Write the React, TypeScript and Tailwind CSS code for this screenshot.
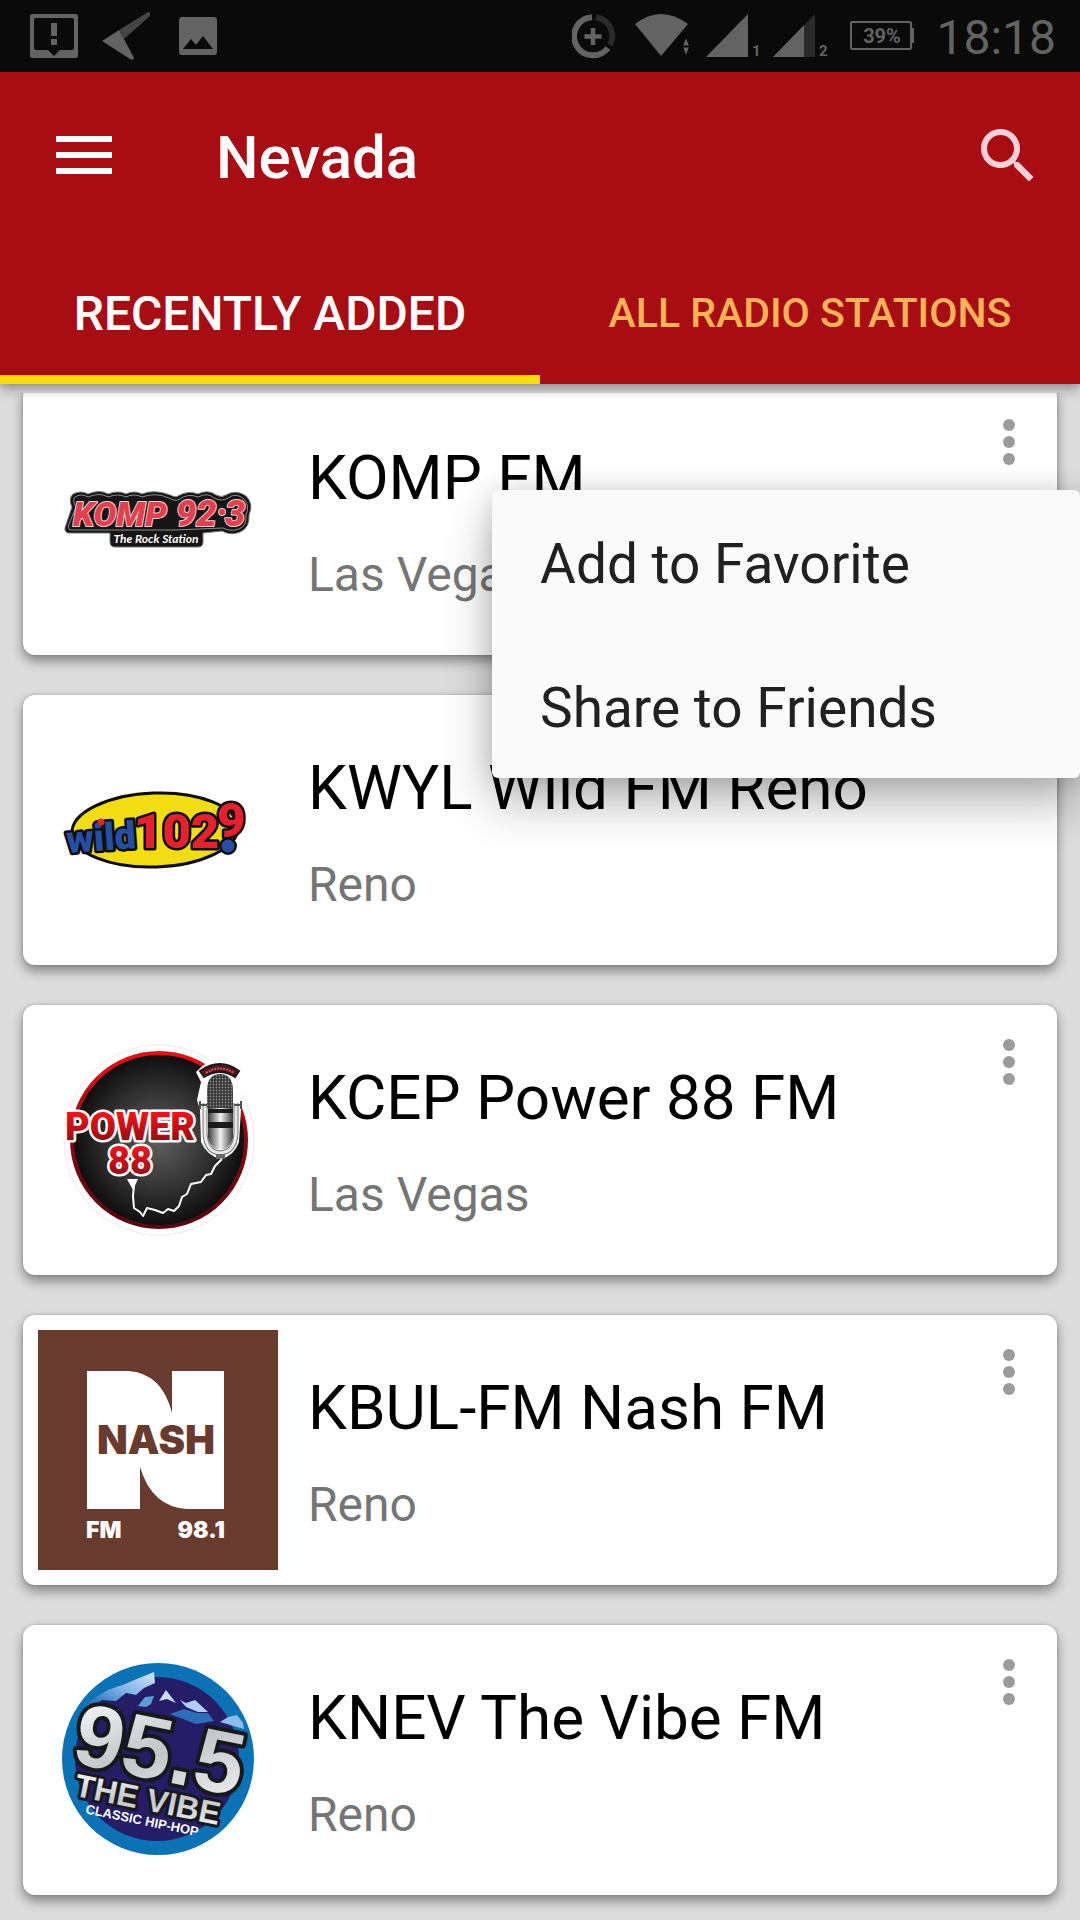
import { useState } from "react";

interface IStation {
  id: number;
  name: string;
  city: string;
  Logo: () => React.ReactElement;
}

const SANS = "'Liberation Sans', Arial, sans-serif";
const ROBOTO = "Roboto, sans-serif";

const tabs = ["Recently Added", "All Radio Stations"];
const menuItems = ["Add to Favorite", "Share to Friends"];

function KompLogo() {
  return (
    <svg viewBox="0 0 240 240" className="h-full w-full" aria-hidden="true">
      <path
        d="M35 94 Q43 90 50 94 Q62 89 70 94 Q80 90 88 94 Q96 90 104 94 Q116 89 132 95 Q138 98 140 96 Q150 90 160 94 Q170 89 178 95 Q184 98 188 95 Q198 89 208 96 Q216 104 211 115 Q212 128 202 132 Q193 136 184 131 L165 133 V142 Q165 147 160 147 H77 Q72 147 72 142 V133 H30 Q25 131 28 125 L34 107 Q30 99 35 94 Z"
        fill="#161515"
        stroke="#777"
        strokeWidth="1"
      />
      <path
        d="M37 97 Q43 93 50 97 Q62 92 70 97 Q80 93 88 97 Q96 93 104 97 Q118 92 131 98 Q138 102 142 99 Q150 93 160 97 Q170 92 176 98 Q184 102 190 98 Q198 92 206 99 Q212 106 208 115 Q209 126 201 129 Q193 132 185 128 L137 130 H32 Q29 128 31 124 L38 107 Q34 101 37 97 Z"
        fill="none"
        stroke="#83918f"
        strokeWidth="1"
      />
      <g
        fontFamily={ROBOTO}
        fontWeight="900"
        fontStyle="italic"
        fill="#e2404f"
        stroke="#f9cfd1"
        strokeWidth="2"
        strokeLinejoin="round"
        paintOrder="stroke"
      >
        <text x="35" y="126" fontSize="34">KOMP</text>
        <text x="138" y="126" fontSize="36">92</text>
        <circle cx="184" cy="112" r="3" />
        <text x="187" y="126" fontSize="36">3</text>
      </g>
      <text x="118" y="143" textAnchor="middle" fontFamily="Lato, sans-serif" fontSize="12" fontWeight="700" fontStyle="italic" fill="#fff">
        The Rock Station
      </text>
    </svg>
  );
}

function WildLogo() {
  return (
    <svg viewBox="0 0 240 240" className="h-full w-full" aria-hidden="true">
      <ellipse cx="117" cy="120" rx="83" ry="37" fill="#f2dd12" stroke="#0d0d0d" strokeWidth="3" transform="rotate(-2 117 120)" />
      <g fontFamily={ROBOTO} fontWeight="900" stroke="#0d0d0d" strokeWidth="5" strokeLinejoin="round" paintOrder="stroke">
        <text x="29" y="143" fontSize="38" fill="#264fa3" transform="rotate(-4 29 143)">wild</text>
        <circle cx="190" cy="136" r="6.500" fill="#264fa3" />
        <text x="96" y="138" fontSize="49" fill="#e8202d">102</text>
        <text x="179" y="127" fontSize="49" fill="#e8202d">9</text>
      </g>
      <circle cx="63" cy="112" r="3.500" fill="#e51f2b" />
    </svg>
  );
}

function PowerLogo() {
  return (
    <svg viewBox="0 0 240 240" className="h-full w-full" aria-hidden="true">
      <defs>
        <radialGradient id="power-disc">
          <stop offset="0" stopColor="#606060" />
          <stop offset="0.6" stopColor="#303030" />
          <stop offset="1" stopColor="#0c0c0c" />
        </radialGradient>
        <linearGradient id="power-ring" x1="0" y1="0" x2="0" y2="1">
          <stop offset="0" stopColor="#e80f12" />
          <stop offset="0.5" stopColor="#8d0710" />
          <stop offset="1" stopColor="#560513" />
        </linearGradient>
        <linearGradient id="power-text" x1="0" y1="0" x2="0" y2="1">
          <stop offset="0.2" stopColor="#ee1419" />
          <stop offset="0.9" stopColor="#8e0a10" />
        </linearGradient>
        <linearGradient id="power-mic" x1="0" y1="0" x2="1" y2="0">
          <stop offset="0" stopColor="#3a3a3a" />
          <stop offset="0.5" stopColor="#f2f2f2" />
          <stop offset="1" stopColor="#3d3d3d" />
        </linearGradient>
        <pattern id="power-mesh" width="3" height="3" patternUnits="userSpaceOnUse">
          <rect width="3" height="3" fill="#333" />
          <circle cx="1.500" cy="1.500" r="0.900" fill="#8b8b8b" />
        </pattern>
      </defs>
      <circle cx="121" cy="120" r="95" fill="#fff" stroke="#ececec" />
      <circle cx="121" cy="120" r="87" fill="url(#power-disc)" stroke="url(#power-ring)" strokeWidth="4" />
      <path d="M158 52 Q182 26 208 49 L205 60 L204 80 L203 90 L201 122 Q196 136 183 139 Q169 136 163 122 L162 90 L159 80 L163 62 Z" fill="#fff" />
      <path d="M162 51 Q182 37 201 51 L197 57 Q182 47 166 57 Z" fill="#5a141b" stroke="#181818" strokeWidth="2" />
      <path d="M168 53 Q182 44 196 53" fill="none" stroke="#c9565c" strokeWidth="2" strokeDasharray="2 1" />
      <path d="M167 83 V113 Q168 132 182 133 Q197 132 198 113 V83" fill="none" stroke="#777" strokeWidth="5" />
      <path d="M167 83 V113 Q168 132 182 133 Q197 132 198 113 V83" fill="none" stroke="#e9e9e9" strokeWidth="3" />
      <path d="M169 88 V71 Q169 54 182 54 Q195 54 195 71 V88 Z" fill="url(#power-mesh)" />
      <rect x="170" y="88" width="25" height="22" fill="url(#power-mic)" />
      <path d="M170 89h25v4h-25zM170 102h25v6h-25z" fill="#1b1b1b" />
      <path d="M170 108 H195 V118 Q192 129 182 130 Q173 129 170 118 Z" fill="url(#power-mic)" />
      <path d="M162 81v8M162 85h7M203 81v8M196 85h7" stroke="#505050" strokeWidth="2" />
      <path d="M178 134h9v5h-9z" fill="#666" />
      <path d="M94 160 L96 166 L95 176 L96 188 L102 192 L105 196 L109 188 L117 190 L125 193 L130 189 L136 191 L141 186 L144 177 L149 174 L153 164 L163 162 L168 155 L173 154 L177 146 L184 139" fill="none" stroke="#fff" strokeWidth="2" strokeLinejoin="round" />
      <path d="M89 159h11l-5 11z" fill="#fff" />
      <g fontFamily={ROBOTO} fontWeight="900" stroke="#fff" strokeWidth="5" strokeLinejoin="round" paintOrder="stroke" textAnchor="middle" fill="url(#power-text)">
        <text x="92" y="120" fontSize="38">POWER</text>
        <text x="92" y="154" fontSize="38">88</text>
      </g>
    </svg>
  );
}

function NashLogo() {
  return (
    <svg viewBox="0 0 240 240" className="h-full w-full" aria-hidden="true">
      <rect width="240" height="240" fill="#683b2e" />
      <path d="M49 41 H90 Q124 43 134 83 V41 H186 V179 H149 Q114 177 102 137 V179 H49 Z" fill="#fff" />
      <g fontFamily="Inter, sans-serif" fontWeight="900">
        <text x="118" y="124" fontSize="40" textAnchor="middle" fill="#683b2e">NASH</text>
        <text x="48" y="208" fontSize="23" fill="#fff">FM</text>
        <text x="187" y="208" fontSize="23" textAnchor="end" fill="#fff">98.1</text>
      </g>
    </svg>
  );
}

function VibeLogo() {
  return (
    <svg viewBox="0 0 240 240" className="h-full w-full" aria-hidden="true">
      <defs>
        <linearGradient id="vibe-text" x1="0" y1="0" x2="1" y2="1">
          <stop offset="0" stopColor="#fff" />
          <stop offset="0.5" stopColor="#c4c5c7" />
          <stop offset="1" stopColor="#f5f5f5" />
        </linearGradient>
        <linearGradient id="vibe-snow" x1="1" y1="0" x2="0" y2="1">
          <stop offset="0" stopColor="#d4e4fb" />
          <stop offset="0.5" stopColor="#7fb2e6" />
          <stop offset="1" stopColor="#0f62a8" />
        </linearGradient>
      </defs>
      <circle cx="120" cy="119" r="96" fill="#0b72b5" />
      <circle cx="119" cy="119" r="82" fill="#251d66" />
      <path d="M50 62 L70 50 L84 45 L116 32 L117 43 L106 48 L98 55 L88 53 L78 61 L64 60 L52 68 Z" fill="url(#vibe-snow)" />
      <path d="M100 66 L107 57 L116 56 L113 64 L108 67 Z" fill="#5f9bd8" />
      <path d="M121 61 L128 50 L138 63 L129 59 Z" fill="#c9dcf9" />
      <path d="M142 60 L148 63 L157 60 L170 72 L160 72 L148 67 Z" fill="#b3cdf4" />
      <path d="M132 74 L146 69 L159 73 L170 73 L176 81 L158 84 Z" fill="#2a6fb8" />
      <path d="M182 82 L190 77 L199 75 L205 83 L206 89 Z" fill="#8bbcec" />
      <g fontFamily={SANS} fontWeight="700" transform="rotate(11.500 36 122)">
        <g stroke="#17181c" strokeLinejoin="round" paintOrder="stroke" fill="url(#vibe-text)">
          <text x="32" y="123" fontSize="88" strokeWidth="8">95.5</text>
          <text x="42" y="155" fontSize="32" strokeWidth="6">THE VIBE</text>
        </g>
        <text x="57" y="170" fontSize="13" fill="#fff">CLASSIC HIP-HOP</text>
      </g>
    </svg>
  );
}

const stations: IStation[] = [
  { id: 0, name: "KOMP FM", city: "Las Vegas", Logo: KompLogo },
  { id: 1, name: "KWYL Wild FM Reno", city: "Reno", Logo: WildLogo },
  { id: 2, name: "KCEP Power 88 FM", city: "Las Vegas", Logo: PowerLogo },
  { id: 3, name: "KBUL-FM Nash FM", city: "Reno", Logo: NashLogo },
  { id: 4, name: "KNEV The Vibe FM", city: "Reno", Logo: VibeLogo },
];

function StatusBar() {
  return (
    <div className="flex h-18 items-center justify-between bg-[#0a0a0a] pr-6 pl-[30px] text-[#636363]">
      <div className="flex items-center gap-6">
        <svg viewBox="0 0 48 48" className="size-12" fill="currentColor">
          <path fillRule="evenodd" d="M2 2h44q2 0 2 2v40q0 2-2 2H2q-2 0-2-2V4q0-2 2-2zM6 6q-2 0-2 2v28q0 2 2 2h12l6 6 6-6h12q2 0 2-2V8q0-2-2-2z" />
          <path d="M21 11h6v13h-6zM21 27h6v6h-6z" />
        </svg>
        <svg viewBox="0 0 48 48" className="size-12">
          <path d="M0 29 L17 18 L22 27 L32 46 Q31 49 28 47 Z" fill="#636363" />
          <path d="M17 18 L46 0 Q50 1 47 5 L22 27 Z" fill="#444" />
        </svg>
        <svg viewBox="0 0 48 48" className="size-12" fill="currentColor">
          <path fillRule="evenodd" d="M8 5h32q3 0 3 3v32q0 3-3 3H8q-3 0-3-3V8q0-3 3-3zM9 37h30L29 24l-7 9-5-6z" />
        </svg>
      </div>
      <div className="flex items-center gap-[22px]">
        <div className="flex items-center gap-3">
          <svg viewBox="0 0 50 48" className="h-12 w-[50px]" fill="none">
            <path d="M20 5.300 A19 19 0 1 0 36 36" stroke="#636363" strokeWidth="6" />
            <path d="M24 5.300 A19 19 0 0 1 38 33" stroke="#2a2a2a" strokeWidth="6" />
            <path d="M21 16v17M12.500 24.500h17" stroke="#636363" strokeWidth="4.500" />
          </svg>
          <svg viewBox="0 0 60 48" className="h-12 w-[60px]" fill="currentColor">
            <path d="M1 12 Q27 -8 54 12 L27 44 Z" />
            <path d="M52 25l3.500 9h-7zM52 44l3.500-9h-7z" stroke="#0a0a0a" strokeWidth="1" />
          </svg>
          <svg viewBox="0 0 55 48" className="h-12 w-[55px]" fill="currentColor">
            <path d="M0 45H42V2z" />
            <text x="46" y="44" fontSize="15" fontWeight="700">1</text>
          </svg>
          <svg viewBox="0 0 55 48" className="h-12 w-[55px]" fill="currentColor">
            <path d="M0 45H42V2z" fill="#2a2a2a" />
            <path d="M0 45H31V13z" />
            <text x="46" y="44" fontSize="15" fontWeight="700">2</text>
          </svg>
        </div>
        <svg viewBox="0 0 64 48" className="h-12 w-16" fill="none">
          <rect x="1" y="10" width="60" height="27" rx="1" stroke="currentColor" strokeWidth="2" />
          <path d="M62.500 16v15" stroke="currentColor" strokeWidth="3" />
          <text x="32" y="31" textAnchor="middle" fontSize="20" fontWeight="700" fill="currentColor">39%</text>
        </svg>
        <span className="pt-1 text-5xl">18:18</span>
      </div>
    </div>
  );
}

function Popup({ onSelect }: { onSelect: () => void }) {
  return (
    <div
      role="menu"
      className="absolute top-[105px] -right-[23px] z-10 flex w-[588px] flex-col rounded-md bg-[#fafafa] shadow-[0_24px_48px_rgba(0,0,0,0.3),0_0_24px_rgba(0,0,0,0.12)]"
    >
      {menuItems.map((item) => (
        <button
          key={item}
          type="button"
          role="menuitem"
          onClick={onSelect}
          className="h-36 px-12 pt-1 text-left text-[55px] text-[#212121]"
        >
          {item}
        </button>
      ))}
    </div>
  );
}

function App() {
  const [activeTab, setActiveTab] = useState(0);
  const [openMenu, setOpenMenu] = useState<null | number>(0);

  return (
    <div className="flex min-h-screen w-full flex-col bg-[#dcdcdc] font-['Roboto',sans-serif]">
      <header className="relative z-20 bg-[#a80d14] text-white shadow-[0_4px_12px_rgba(0,0,0,0.4)]">
        <StatusBar />
        <div className="flex h-42 items-center pr-9 pl-12">
          <button type="button" aria-label="Open navigation">
            <svg viewBox="0 0 72 72" className="size-18" fill="currentColor">
              <path d="M8 16h56v6H8zM8 32h56v6H8zM8 48h56v6H8z" />
            </svg>
          </button>
          <h1 className="ml-24 flex-1 pt-1 text-6xl font-medium">Nevada</h1>
          <button type="button" aria-label="Search" className="text-[#fbd0d6]">
            <svg viewBox="0 0 24 24" className="size-18" fill="currentColor">
              <path d="M15.500 14h-.79l-.28-.27C15.410 12.590 16 11.110 16 9.500 16 5.910 13.090 3 9.500 3S3 5.910 3 9.500 5.910 16 9.500 16c1.610 0 3.090-.59 4.230-1.570l.27.28v.79l5 4.990L20.490 19l-4.990-5zm-6 0C7.010 14 5 11.990 5 9.500S7.010 5 9.500 5 14 7.010 14 9.500 11.990 14 9.500 14z" />
            </svg>
          </button>
        </div>
        <div role="tablist" className="grid h-36 grid-cols-2">
          {tabs.map((tab, i) => (
            <button
              key={tab}
              type="button"
              role="tab"
              aria-selected={activeTab === i}
              onClick={() => setActiveTab(i)}
              className={`border-b-[9px] pt-3 font-medium uppercase ${
                activeTab === i
                  ? "border-[#fbdc04] text-5xl text-white"
                  : "border-transparent text-[41px] text-[#fab455]"
              }`}
            >
              {tab}
            </button>
          ))}
        </div>
      </header>

      <main className="flex-1 pt-[9px]">
        <div className="overflow-hidden">
          <ul className="-mt-2 flex flex-col gap-10 px-[23px] pb-[25px]">
            {stations.map(({ id, name, city, Logo }) => (
              <li
                key={id}
                className="relative flex rounded-xl bg-white p-[15px] shadow-[0_6px_12px_rgba(0,0,0,0.4),0_0_3px_rgba(0,0,0,0.2)]"
              >
                <div className="size-60 shrink-0">
                  <Logo />
                </div>
                <div className="flex flex-1 flex-col gap-[33px] pt-[42px] pl-[30px]">
                  <h2 className="text-[62px] leading-[72px] text-black">{name}</h2>
                  <p className="text-5xl leading-[56px] text-[#757575]">{city}</p>
                </div>
                <button
                  type="button"
                  aria-label={`Options for ${name}`}
                  onClick={() => setOpenMenu(openMenu === id ? null : id)}
                  className="self-start"
                >
                  <svg viewBox="0 0 66 84" className="h-21 w-[66px]" fill="#9b9b9b">
                    <circle cx="33" cy="25" r="6" />
                    <circle cx="33" cy="42" r="6" />
                    <circle cx="33" cy="59" r="6" />
                  </svg>
                </button>
                {openMenu === id && <Popup onSelect={() => setOpenMenu(null)} />}
              </li>
            ))}
          </ul>
        </div>
      </main>
    </div>
  );
}

export default App;
